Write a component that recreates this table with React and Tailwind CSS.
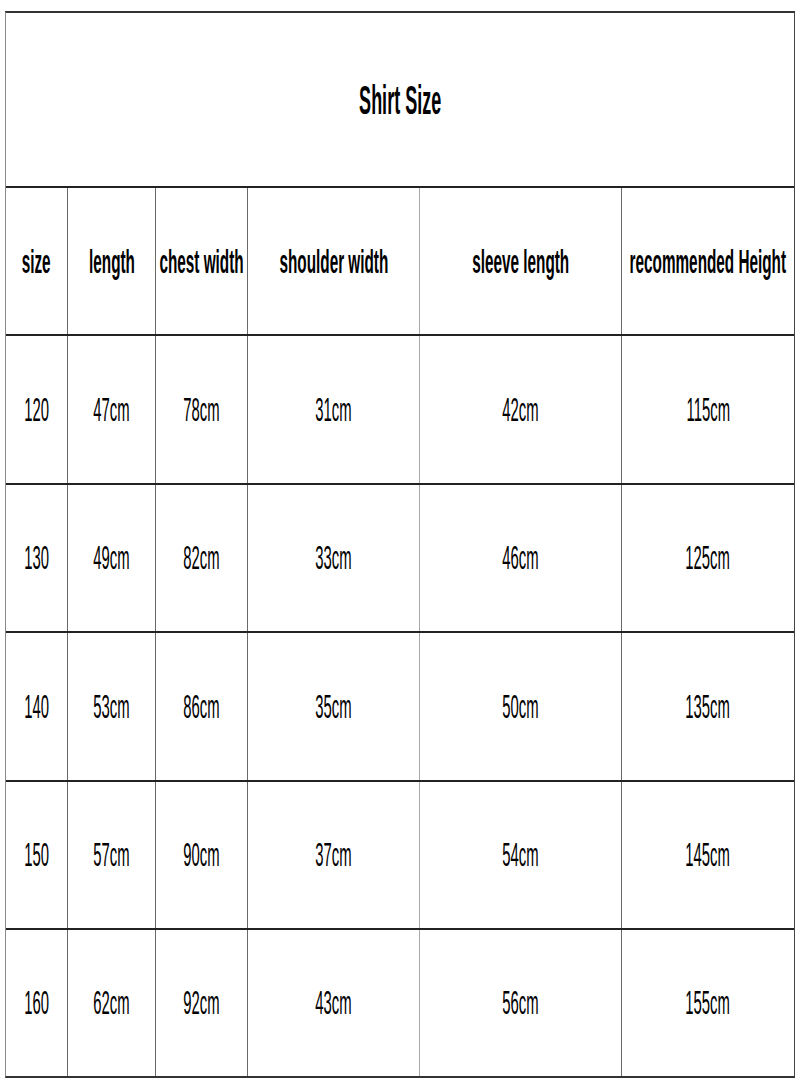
// Size chart table: title row, header row and five data rows.
const columns = ['size', 'length', 'chest width', 'shoulder width', 'sleeve length', 'recommended Height'];

const rows = [
    ['120', '47cm', '78cm', '31cm', '42cm', '115cm'],
    ['130', '49cm', '82cm', '33cm', '46cm', '125cm'],
    ['140', '53cm', '86cm', '35cm', '50cm', '135cm'],
    ['150', '57cm', '90cm', '37cm', '54cm', '145cm'],
    ['160', '62cm', '92cm', '43cm', '56cm', '155cm'],
];

const rowHeights = ['h-[149px]', 'h-[148px]', 'h-[149px]', 'h-[148px]', 'h-[148px]'];

const cellBorders = [
    '',
    'border-l border-[#6a6a6a]',
    'border-l border-[#6a6a6a]',
    'border-l border-[#6a6a6a]',
    'border-l border-[#a8a8a8]',
    'border-l border-[#6a6a6a]',
];

function Row({ cells, bold = false, height }) {
    return (
        <div className={`grid grid-cols-[61px_88px_92px_172px_202px_minmax(0,1fr)] border-t-2 border-[#222] ${height}`}>
            {cells.map((text, i) => (
                <div key={i} className={`flex min-w-0 items-center justify-center ${cellBorders[i]}`}>
                    <span
                        className={`inline-block shrink-0 whitespace-nowrap scale-x-[0.45] ${
                            bold ? 'text-[34px] font-bold' : 'text-[33px] font-normal'
                        }`}
                    >
                        {text}
                    </span>
                </div>
            ))}
        </div>
    );
}

export default function App() {
    return (
        <div className="h-[1091px] w-[800px] overflow-hidden bg-white pt-[11px] font-['Liberation_Sans',Arial,sans-serif] text-black">
            <div className="ml-[5px] w-[790px] overflow-hidden border-b-2 border-l border-r border-t-2 border-b-[#333] border-l-[#8a8a8a] border-r-[#444] border-t-[#333]">
                <div className="flex h-[173px] items-center justify-center">
                    <span className="inline-block whitespace-nowrap scale-x-[0.45] text-[40px] font-bold">
                        Shirt Size
                    </span>
                </div>
                <Row cells={columns} bold height="h-[148px]" />
                {rows.map((r, i) => (
                    <Row key={r[0]} cells={r} height={rowHeights[i]} />
                ))}
            </div>
        </div>
    );
}
